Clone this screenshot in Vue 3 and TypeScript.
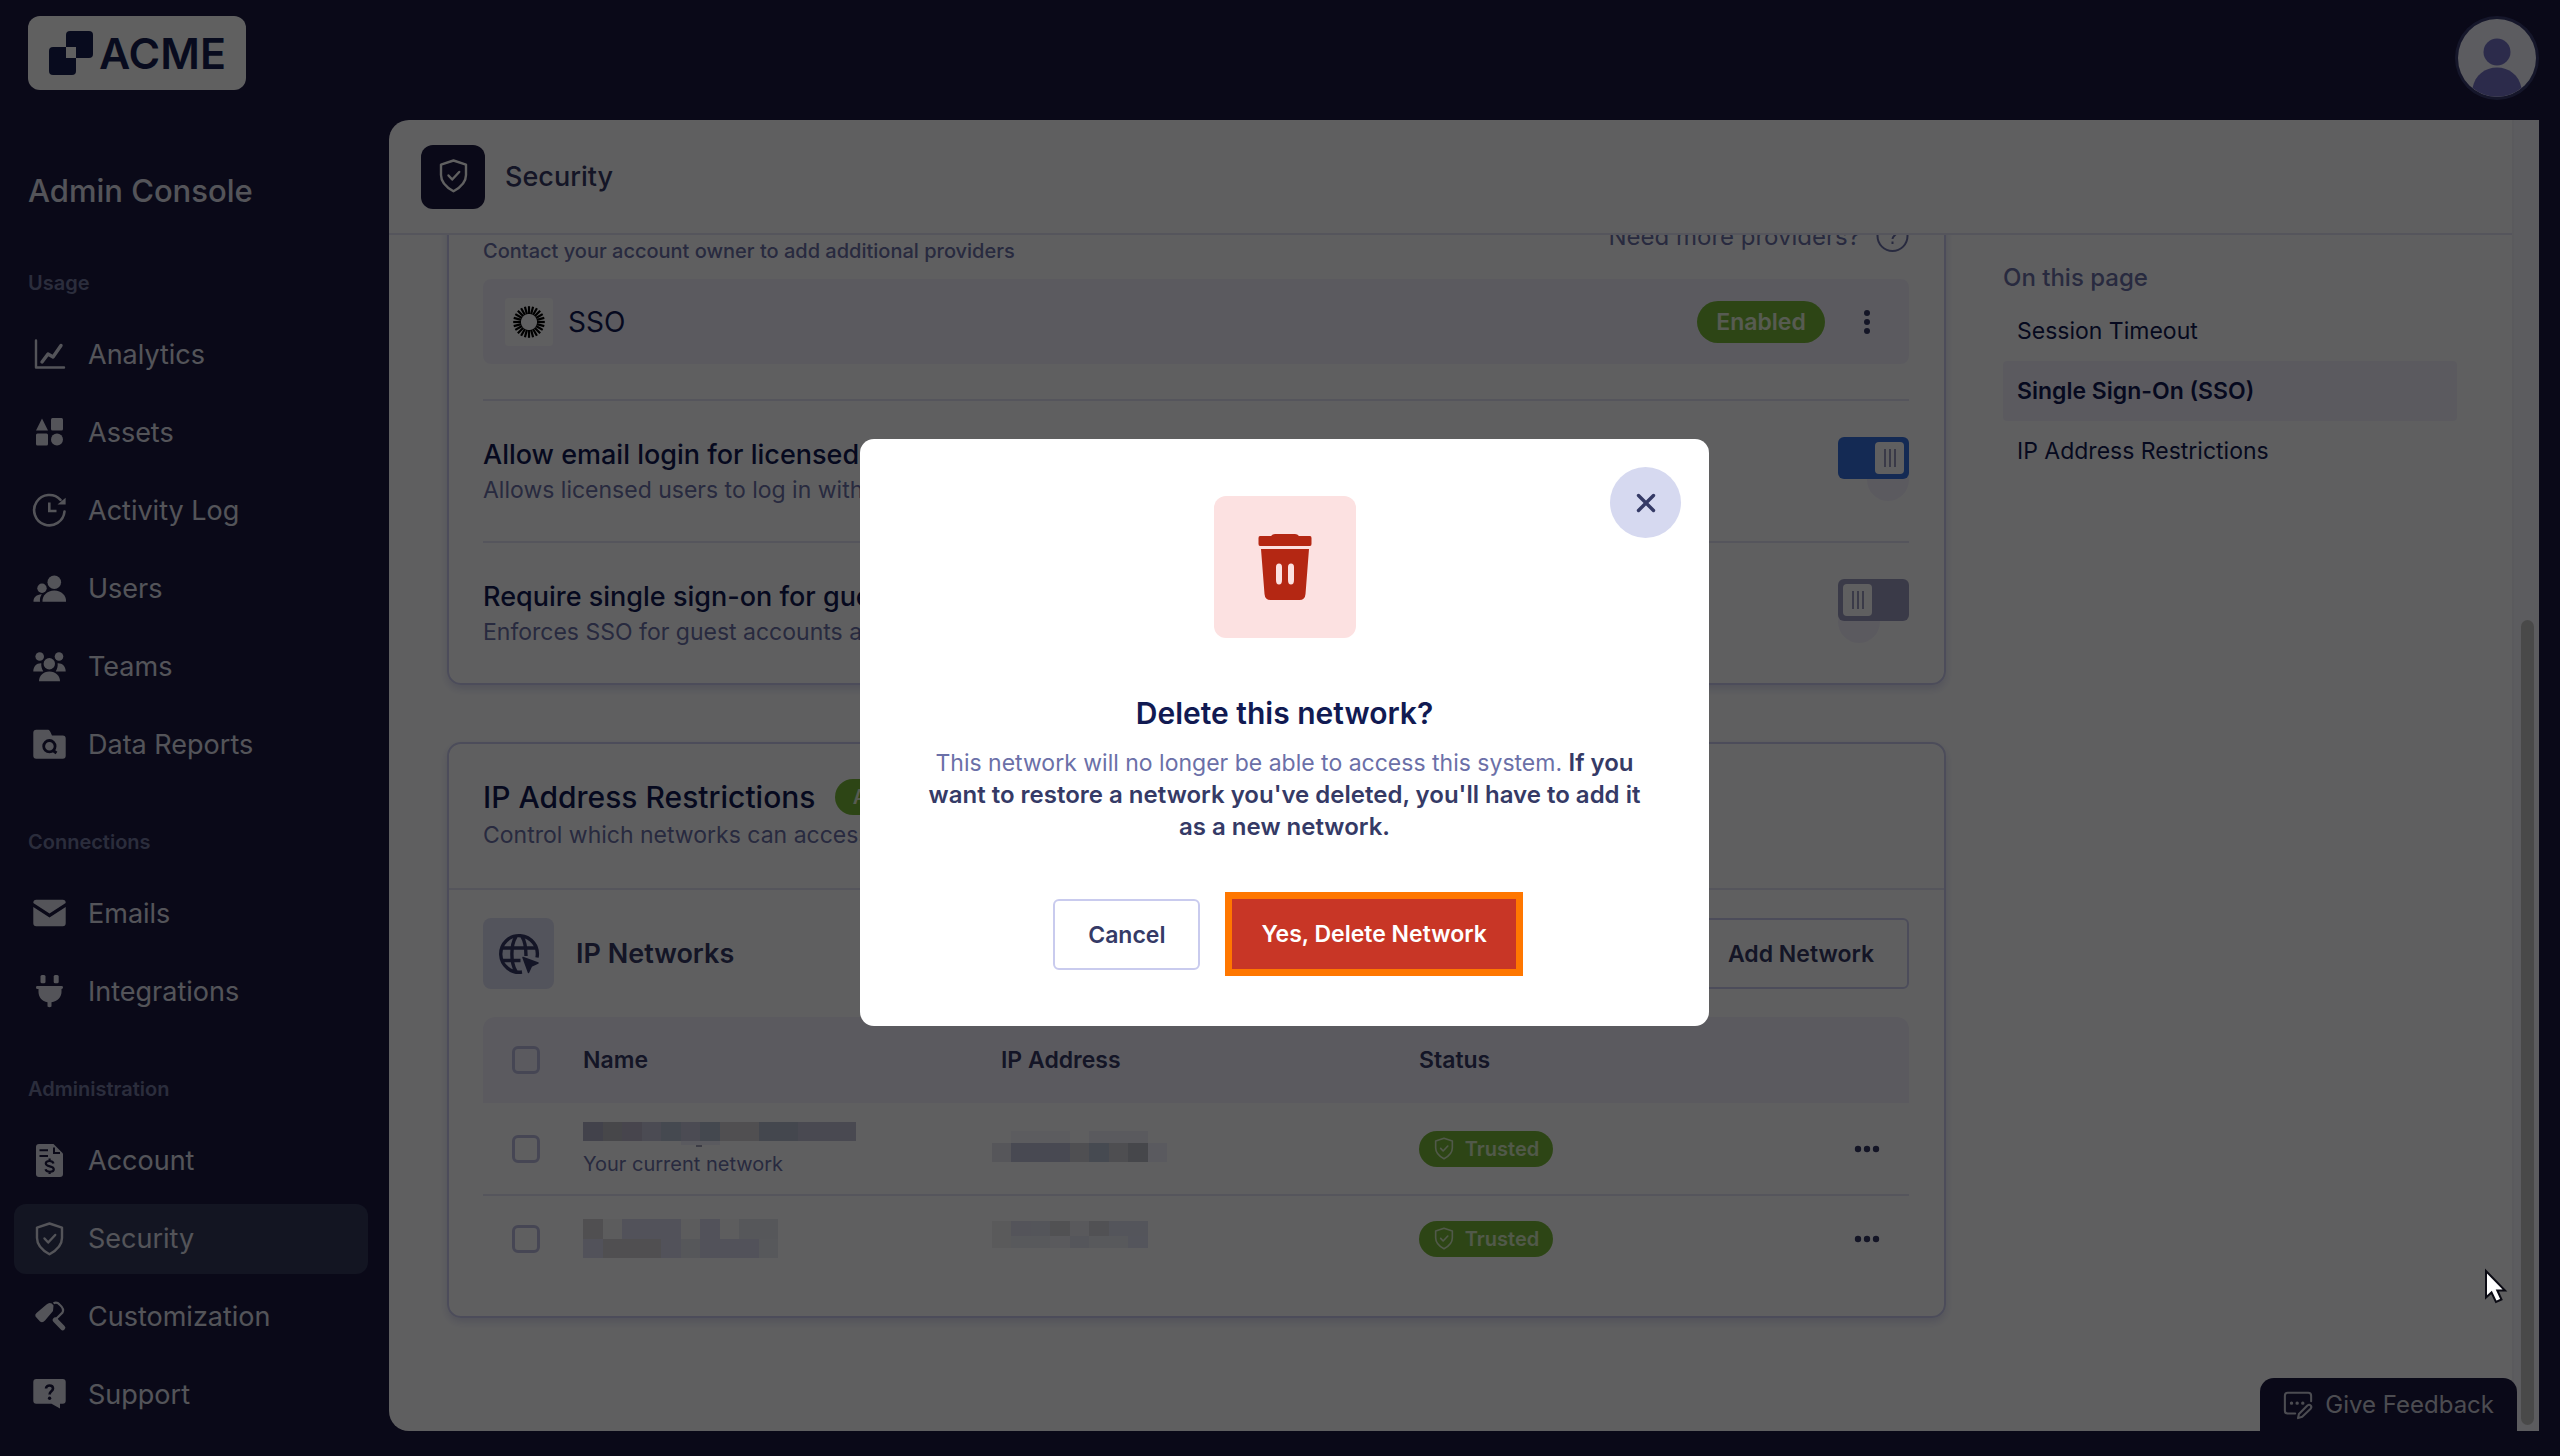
<script setup lang="ts">
import { ref } from 'vue'

interface NavItem {
  label: string
  icon: string
  active?: boolean
}

interface NavGroup {
  title: string
  items: NavItem[]
}

interface Cell {
  x: number
  y: number
  w: number
  h: number
  c: string
}

interface NetworkRow {
  id: string
  note: string
  name: Cell[]
  ip: Cell[]
}

const shield =
  '<path d="M16.5 0.5 29 4.6V15c0 7-5 12.200-12.500 16.200C9 27.200 4 22 4 15V4.600Z" fill="none" stroke="currentColor" stroke-width="2.400" stroke-linejoin="round"/><path d="m11.500 15.500 3.700 4 7-7.500" fill="none" stroke="currentColor" stroke-width="2.400" stroke-linecap="round" stroke-linejoin="round"/>'

const groups: NavGroup[] = [
  {
    title: 'Usage',
    items: [
      {
        label: 'Analytics',
        icon: '<path d="M3 1.500V28.500H31" fill="none" stroke="currentColor" stroke-width="2.400" stroke-linejoin="round" stroke-linecap="round"/><path d="m9 23 6-8 5 3 8-11.500" fill="none" stroke="currentColor" stroke-width="3.400" stroke-linejoin="round" stroke-linecap="round"/>'
      },
      {
        label: 'Assets',
        icon: '<path d="M9 1.500 15 13.500H3Z"/><rect x="18" y="1" width="12" height="12.500" rx="1.500"/><rect x="3" y="16.500" width="12" height="12" rx="1.500"/><circle cx="24" cy="22.500" r="6"/>'
      },
      {
        label: 'Activity Log',
        icon: '<path d="M31.500 16.500A15.200 15.200 0 1 1 27.500 4.800" fill="none" stroke="currentColor" stroke-width="2.600" stroke-linecap="round"/><path d="M32.600 2.800V9.500H24.500Z"/><path d="M16.300 7.500V16H23.500" fill="none" stroke="currentColor" stroke-width="2.600"/>'
      },
      {
        label: 'Users',
        icon: '<circle cx="21.300" cy="9.200" r="6.800"/><path d="M9.500 28.800C9 23 14 17.600 21.300 17.600S33.500 23 33 28.800Z"/><circle cx="9" cy="15.200" r="4.700"/><path d="M.5 28.800C.3 24.500 3.500 21.600 8.800 21.300 7.200 23.600 6.700 26 7 28.800Z"/>'
      },
      {
        label: 'Teams',
        icon: '<circle cx="6.700" cy="5.500" r="4.300"/><circle cx="26" cy="5.500" r="4.300"/><circle cx="16.300" cy="12.800" r="5.700"/><path d="M6 30.300C6 25 10 20.500 16.400 20.500S27 25 27 30.300Z"/><path d="M.3 20.500C.3 15.500 3.500 12 8.300 12.200 8 15.500 8.800 17.500 10.300 20.500Z"/><path d="M32.700 20.500C32.700 15.500 29.500 12 24.600 12.200 25 15.500 24.200 17.500 22.700 20.500Z"/>'
      },
      {
        label: 'Data Reports',
        icon: '<path d="M3.300.8H14.500c2.500 0 3 2.500 4.500 5.700H29.700q3 0 3 3V26.800q0 3-3 3H3.300q-3 0-3-3V3.800q0-3 3-3Z"/><circle cx="16.400" cy="17.200" r="5.700" fill="none" stroke="#1b1840" stroke-width="2.800"/><path d="m20 21.500 3.500 2.500" stroke="#1b1840" stroke-width="3"/>'
      }
    ]
  },
  {
    title: 'Connections',
    items: [
      {
        label: 'Emails',
        icon: '<path d="M3.300 1.800H29.700Q32.700 1.800 32.700 5L16.500 15.500.3 5Q.3 1.800 3.300 1.800Z"/><path d="M.3 9 16.500 19.500 32.700 9V25.200q0 3-3 3H3.300q-3 0-3-3Z"/>'
      },
      {
        label: 'Integrations',
        icon: '<rect x="7.500" y="-1" width="5" height="8.200" rx="1.500"/><rect x="20.700" y="-1" width="5" height="8.200" rx="1.500"/><path d="M4.500 10H28.500q1.500 0 1.500 1.400T28.500 13V16c0 5-4 9.500-10 10.300V30.500q-2 1.500-4 0V26.300C9 25.500 5.500 21 5.500 16V13H4.500Q3 13 3 11.400T4.500 10Z"/>'
      }
    ]
  },
  {
    title: 'Administration',
    items: [
      {
        label: 'Account',
        icon: '<path d="M6 -1H20.500L30 8.500V29q0 3-3 3H6q-3 0-3-3V2q0-3 3-3Z"/><path d="M6.500 5.300H15M6.500 11H15" stroke="#1b1840" stroke-width="2"/><path d="M21 2.500V8H27" fill="none" stroke="#1b1840" stroke-width="2"/><path d="M20.500 18.500C19.500 15 12.800 15.300 12.800 18.500 12.800 22.300 20.800 20.500 20.800 24.300 20.800 27.500 13.500 27.800 12.500 24.300M16.600 13.500V16M16.600 26.500V29" fill="none" stroke="#1b1840" stroke-width="2.200"/>'
      },
      { label: 'Security', icon: shield, active: true },
      {
        label: 'Customization',
        icon: '<path d="M13.500 3.500Q16 1 18.800 2.500L20.500 4.500 20 10 12 19.500Q9.500 22.500 7 20.500L2.500 15.500Q1.500 13.500 3.500 12Z"/><path d="M20.500 2.200Q24 .5 26.500 3.500 31.500 7.800 29.500 11.500L22 19" fill="none" stroke="currentColor" stroke-width="2.200"/><path d="m22.200 19 7.500 7.700" stroke="currentColor" stroke-width="5.200" stroke-linecap="round"/>'
      },
      {
        label: 'Support',
        icon: '<path d="M3.300 0H29.700q3 0 3 3V21.800q0 3-3 3H27V29.500L18.500 24.800H3.300q-3 0-3-3V3q0-3 3-3Z"/><path d="M13 9.500C13 5.500 20 5.500 20 9.500 20 12.500 16.600 12 16.600 15.500" fill="none" stroke="#1b1840" stroke-width="2.600"/><circle cx="16.600" cy="19.200" r="1.700" fill="#1b1840"/>'
      }
    ]
  }
]

const pageLinks = [
  { label: 'Session Timeout', active: false },
  { label: 'Single Sign-On (SSO)', active: true },
  { label: 'IP Address Restrictions', active: false }
]

const settings = ref([
  {
    id: 'email-login',
    title: 'Allow email login for licensed users',
    text: 'Allows licensed users to log in with their email',
    on: true
  },
  {
    id: 'guest-sso',
    title: 'Require single sign-on for guests',
    text: 'Enforces SSO for guest accounts as well',
    on: false
  }
])

// Builds one strip of redaction blocks from a list of colours.
function strip(y: number, h: number, size: number, colors: string[]): Cell[] {
  return colors
    .map((c, i) => ({ x: i * size, y, w: size, h, c }))
    .filter((cell) => cell.c !== '')
}

const networks: NetworkRow[] = [
  {
    id: 'current',
    note: 'Your current network',
    name: [
      ...strip(2, 19, 20, ['#b0b0c8', '#bcbcc4', '#bcb8cc', '#c6c6dc', '#b8c2d4', '#c6c6dc', '#b4c0d2', '#d4d2d8', '#d4d2d8', '#b4becf', '#b4becf', '#c2c2d8', '#c2c2d8', '#c2c2d8']),
      { x: 100, y: 21, w: 40, h: 4, c: '#f0f0fc' },
      { x: 116, y: 25, w: 6, h: 2, c: '#9fa0b8' }
    ],
    ip: [
      ...strip(0, 12, 20, ['', '#f3f3fb', '#f3f3fb', '#f3f3fb', '', '#f0f0fa', '#f0f0fa', '#f0f0fa']),
      ...strip(12, 19, 20, ['#e4e5f0', '#c0c2da', '#c0c2da', '#c0c2da', '#d2d2da', '#b9c5d6', '#ceced6', '#bbbcc6', '#f0f0fc'])
    ]
  },
  {
    id: 'second',
    note: '',
    name: [
      ...strip(0, 20, 20, ['#d4d2d8', '#f3f3f8', '#dadbf0', '#dadbf0', '#dadbf0', '#f3f3f8', '#dadbf0', '#f6f6fa', '#e4e6f0', '#e4e6f0']),
      ...strip(20, 19, 20, ['#dadbf0', '#d4d2d8', '#d4d2d8', '#d4d2d8', '#dadbf0', '#e4e6f0', '#dadbf0', '#dadbf0', '#dadbf0', '#e8eaf2'])
    ],
    ip: [
      ...strip(0, 15, 20, ['#eeeef2', '#dfe0ee', '#dfe1f0', '#d6d6dc', '#ebecf4', '#d8d8de', '#dfe1f1', '#dfe1f1']),
      ...strip(15, 12, 20, ['#eeeef2', '#e9ebf4', '#e9ebf4', '#f0f0f6', '#e2e4f2', '#e9ebf4', '#e9ebf4', '#dfe1f4'])
    ]
  }
]

const rays = Array.from({ length: 24 }, (_, i) => i * 15)
</script>

<template>
  <div class="app">
    <header class="topbar">
      <a class="logo" href="#" aria-label="ACME home">
        <svg width="44" height="44" viewBox="0 0 44 44" aria-hidden="true">
          <rect x="17" y="0" width="27" height="27" rx="4" />
          <rect x="0" y="16" width="27" height="28" rx="4" />
          <rect x="17" y="16" width="10" height="11" fill="#fff" />
        </svg>
        <span>ACME</span>
      </a>
      <button class="avatar" type="button" aria-label="Profile">
        <svg width="78" height="78" viewBox="0 0 78 78" aria-hidden="true">
          <circle cx="39" cy="39" r="39" fill="#f5f5ff" />
          <circle cx="39" cy="33" r="13.500" fill="#7573c8" />
          <path d="M14.500 69C17 56 27 48.500 39 48.500S61 56 63.500 69A39 39 0 0 1 14.500 69Z" fill="#7573c8" />
        </svg>
      </button>
    </header>

    <aside class="sidebar">
      <h1>Admin Console</h1>
      <nav v-for="group in groups" :key="group.title" class="nav-group" :aria-label="group.title">
        <h2>{{ group.title }}</h2>
        <a v-for="item in group.items" :key="item.label" href="#" class="nav-item" :class="{ active: item.active }">
          <svg width="33" height="33" viewBox="0 0 33 33" fill="currentColor" aria-hidden="true" v-html="item.icon"></svg>
          <span>{{ item.label }}</span>
        </a>
      </nav>
    </aside>

    <main class="panel">
      <div class="pane">
        <header class="pane-head">
          <span class="pane-icon">
            <svg width="33" height="33" viewBox="0 0 33 33" aria-hidden="true" v-html="shield"></svg>
          </span>
          <h2>Security</h2>
        </header>

        <div class="viewport">
          <div class="content">
            <div class="cards">
              <section class="card">
                <div class="providers">
                  <p class="hint">Contact your account owner to add additional providers</p>
                  <p class="more">
                    Need more providers?
                    <svg width="33" height="33" viewBox="0 0 33 33" fill="none" stroke="currentColor" stroke-width="2" aria-hidden="true">
                      <circle cx="16.500" cy="15" r="15" />
                      <path d="M12.500 12C12.500 7 20.500 7 20.500 11.500 20.500 14.500 16.500 14.500 16.500 18" />
                      <path d="M16.500 20.500V23" />
                    </svg>
                  </p>
                </div>
                <div class="sso">
                  <span class="sso-logo">
                    <svg width="32" height="32" viewBox="-16 -16 32 32" aria-hidden="true">
                      <path v-for="angle in rays" :key="angle" d="M0 -8V-15.800" :transform="`rotate(${angle})`" stroke="#000" stroke-width="2.200" />
                    </svg>
                  </span>
                  <span class="sso-name">SSO</span>
                  <span class="badge enabled">Enabled</span>
                  <button class="dots" type="button" aria-label="SSO options">
                    <svg width="8" height="26" viewBox="0 0 8 26" aria-hidden="true">
                      <circle cx="4" cy="4" r="3" />
                      <circle cx="4" cy="13" r="3" />
                      <circle cx="4" cy="22" r="3" />
                    </svg>
                  </button>
                </div>
                <div v-for="item in settings" :key="item.id" class="setting">
                  <label :for="item.id">
                    <span class="setting-title">{{ item.title }}</span>
                    <span class="sub">{{ item.text }}</span>
                  </label>
                  <span class="switch" :class="{ on: item.on }">
                    <input :id="item.id" v-model="item.on" type="checkbox" role="switch" />
                  </span>
                </div>
              </section>

              <section class="card">
                <div class="card-head">
                  <div class="title-line">
                    <h3>IP Address Restrictions</h3>
                    <span class="badge small">Active</span>
                  </div>
                  <p class="sub">Control which networks can access</p>
                </div>
                <div class="net-bar">
                  <span class="net-icon">
                    <svg width="40" height="40" viewBox="0 0 40 40" fill="none" stroke="currentColor" stroke-width="3.400" aria-hidden="true">
                      <path d="M23 38A18.300 18.300 0 1 1 38 23.500" />
                      <path d="M17 2.500C11.500 11 11.500 29 17 37.500M23 2.500C26.500 8 27 14 27 22M3.500 14H36.500M3 26.500H21.500" />
                      <path d="M24 23.500 39 29 32.500 32 29.500 38.500Z" fill="currentColor" stroke-width="1.500" stroke-linejoin="round" />
                    </svg>
                  </span>
                  <h4>IP Networks</h4>
                  <button class="outline" type="button">Add Network</button>
                </div>
                <table>
                  <colgroup>
                    <col class="c-check" />
                    <col />
                    <col />
                    <col />
                    <col class="c-action" />
                  </colgroup>
                  <thead>
                    <tr>
                      <th><input type="checkbox" aria-label="Select all networks" /></th>
                      <th>Name</th>
                      <th>IP Address</th>
                      <th>Status</th>
                      <th></th>
                    </tr>
                  </thead>
                  <tbody>
                    <tr v-for="row in networks" :key="row.id">
                      <td><input type="checkbox" :aria-label="`Select ${row.id} network`" /></td>
                      <td>
                        <svg
                          class="mosaic"
                          width="273"
                          :height="row.note ? 30 : 40"
                          :viewBox="`0 0 280 ${row.note ? 30 : 40}`"
                          preserveAspectRatio="none"
                          shape-rendering="crispEdges"
                          aria-hidden="true"
                        >
                          <rect v-for="(b, i) in row.name" :key="i" :x="b.x" :y="b.y" :width="b.w" :height="b.h" :fill="b.c" />
                        </svg>
                        <small v-if="row.note">{{ row.note }}</small>
                      </td>
                      <td>
                        <svg
                          class="mosaic ip"
                          width="175"
                          height="31"
                          viewBox="0 0 180 31"
                          preserveAspectRatio="none"
                          shape-rendering="crispEdges"
                          aria-hidden="true"
                        >
                          <rect v-for="(b, i) in row.ip" :key="i" :x="b.x" :y="b.y" :width="b.w" :height="b.h" :fill="b.c" />
                        </svg>
                      </td>
                      <td>
                        <span class="badge trusted">
                          <svg width="22" height="22" viewBox="0 0 33 33" aria-hidden="true" v-html="shield"></svg>
                          Trusted
                        </span>
                      </td>
                      <td>
                        <button class="dots" type="button" aria-label="Network options">
                          <svg width="26" height="8" viewBox="0 0 26 8" aria-hidden="true">
                            <circle cx="4" cy="4" r="3.200" />
                            <circle cx="13" cy="4" r="3.200" />
                            <circle cx="22" cy="4" r="3.200" />
                          </svg>
                        </button>
                      </td>
                    </tr>
                  </tbody>
                </table>
              </section>
            </div>

            <nav class="toc" aria-label="On this page">
              <h3>On this page</h3>
              <a v-for="link in pageLinks" :key="link.label" href="#" :class="{ active: link.active }">{{ link.label }}</a>
            </nav>
          </div>
        </div>
      </div>

      <div class="track"><div class="thumb"></div></div>

      <button class="feedback" type="button">
        <svg width="30" height="30" viewBox="0 0 32 32" fill="none" stroke="currentColor" stroke-width="2.200" stroke-linecap="round" stroke-linejoin="round" aria-hidden="true">
          <path d="M13 25H5Q2 25 2 22V6Q2 3 5 3H27Q30 3 30 6V12" />
          <path d="M17 25.500 26 16.500Q28 15 29.500 16.500T29.500 20L20.500 28.500 16 30Z" />
          <path d="M9 14H9.200M15 14H15.200M21 14H21.200" stroke-width="3.400" />
        </svg>
        Give Feedback
      </button>
    </main>

    <div class="overlay">
      <div class="dialog" role="dialog" aria-modal="true" aria-labelledby="dialog-title">
        <button class="close" type="button" aria-label="Close">
          <svg width="22" height="22" viewBox="0 0 22 22" aria-hidden="true">
            <path d="M3.500 3.500 18.500 18.500M18.500 3.500 3.500 18.500" stroke="currentColor" stroke-width="3.400" stroke-linecap="round" />
          </svg>
        </button>
        <div class="trash">
          <svg width="54" height="68" viewBox="0 0 54 68" fill="#b42713" aria-hidden="true">
            <path d="M13 3Q14.500 1 17 1H37Q39.500 1 41 3H52Q53.500 3 53.500 5V11Q53.500 13 52 13H2Q.5 13 .5 11V5Q.5 3 2 3Z" />
            <path fill-rule="evenodd" d="M3 16H51L47.500 61Q47 67 41.500 67H12.500Q7 67 6.500 61ZM18 34V47Q18 51.500 21 51.500T24 47V34Q24 30.500 21 30.500T18 34ZM30 34V47Q30 51.500 33 51.500T36 47V34Q36 30.500 33 30.500T30 34Z" />
          </svg>
        </div>
        <h2 id="dialog-title">Delete this network?</h2>
        <p>
          This network will no longer be able to access this system.
          <strong>If you want to restore a network you've deleted, you'll have to add it as a new network.</strong>
        </p>
        <div class="actions">
          <button class="outline" type="button">Cancel</button>
          <button class="danger" type="button">Yes, Delete Network</button>
        </div>
      </div>
    </div>

    <svg class="pointer" width="24" height="36" viewBox="0 0 24 36" aria-hidden="true">
      <path d="M2 1V27.500L7.500 22.500 12 32 17.500 29.500 13.300 20.500H21Z" fill="#fff" stroke="#0b0b14" stroke-width="2" />
    </svg>
  </div>
</template>

<style>
body {
  margin: 0;
  background: #0a0918;
}
</style>

<style scoped>
.app {
  --night: #1b1840;
  --ink: #111a52;
  --slate: #353a66;
  --muted: #6b70a8;
  --line: #e2e1f4;
  --edge: #c9cbee;
  --wash: #f2f0fd;
  --green: #78b838;
  box-sizing: border-box;
  position: relative;
  display: grid;
  grid-template-columns: 389px minmax(0, 1fr);
  grid-template-rows: 120px 1fr;
  min-height: 100vh;
  padding: 0 21px 25px 0;
  background: var(--night);
  color: var(--ink);
  font-family: Inter, "Open Sans", sans-serif;
  font-size: 24px;
  line-height: 32px;
}

.app *,
.app *::before,
.app *::after {
  box-sizing: border-box;
}

h1,
h2,
h3,
h4,
p {
  margin: 0;
  font-weight: 500;
}

a {
  color: inherit;
  text-decoration: none;
}

button {
  margin: 0;
  padding: 0;
  border: 0;
  background: none;
  color: inherit;
  font: inherit;
}

svg {
  display: block;
  flex: none;
  overflow: visible;
}

.topbar {
  grid-column: 1 / -1;
  display: flex;
  justify-content: space-between;
  align-items: flex-start;
  padding: 16px 0 0 28px;
}

.logo {
  display: flex;
  align-items: center;
  gap: 6px;
  width: 218px;
  height: 74px;
  padding-left: 21px;
  border-radius: 12px;
  background: #fff;
  color: #171f50;
  fill: currentColor;
  font-size: 43px;
  font-weight: 600;
}

.avatar {
  padding: 3px;
  border-radius: 50%;
  background: #383b70;
}

.sidebar {
  padding: 51px 21px 0 14px;
  color: #dfe0ec;
}

.sidebar h1 {
  padding-left: 14px;
  font-size: 31px;
  line-height: 40px;
}

.nav-group {
  display: flex;
  flex-direction: column;
  gap: 8px;
  margin-top: 50px;
}

h1 + .nav-group {
  margin-top: 60px;
}

.nav-group h2 {
  margin-bottom: 17px;
  padding-left: 14px;
  color: #7378a0;
  font-size: 20px;
  font-weight: 600;
  line-height: 24px;
}

.nav-item {
  display: flex;
  align-items: center;
  gap: 22px;
  height: 70px;
  padding-left: 19px;
  border-radius: 12px;
  font-size: 27px;
}

.nav-item.active {
  background: #33385b;
}

.panel {
  position: relative;
  display: grid;
  grid-template-columns: minmax(0, 1fr) 27px;
  border-radius: 20px 0 0 20px;
  background: #fdfdff;
  overflow: hidden;
}

.pane {
  display: flex;
  flex-direction: column;
}

.pane-head {
  display: flex;
  align-items: center;
  gap: 20px;
  height: 115px;
  padding-left: 32px;
  border-bottom: 2px solid var(--line);
}

.pane-head h2 {
  color: var(--slate);
  font-size: 27px;
}

.pane-icon {
  display: grid;
  place-items: center;
  width: 64px;
  height: 64px;
  border-radius: 12px;
  background: var(--night);
  color: #fff;
}

.viewport {
  flex: 1;
  overflow: hidden;
}

.content {
  display: grid;
  grid-template-columns: minmax(0, 1fr) 454px;
  gap: 57px;
  margin-top: -39px;
  padding: 0 55px 112px 58px;
}

.cards {
  display: flex;
  flex-direction: column;
  gap: 57px;
}

.card {
  padding: 0 35px 0 34px;
  border: 2px solid var(--edge);
  border-radius: 14px;
  box-shadow: 0 4px 8px #d9daf0;
}

.providers {
  display: flex;
  justify-content: space-between;
  align-items: flex-end;
  margin: 14px 0 17px;
  color: var(--muted);
}

.hint {
  font-size: 20px;
  line-height: 22px;
}

.more {
  display: flex;
  align-items: center;
  gap: 16px;
  height: 50px;
  font-weight: 400;
}

.sso {
  display: flex;
  align-items: center;
  height: 85px;
  margin-bottom: 35px;
  padding: 0 38px 0 22px;
  border-radius: 8px;
  background: var(--wash);
  font-size: 28px;
}

.sso-logo {
  display: grid;
  place-items: center;
  width: 48px;
  height: 48px;
  margin-right: 15px;
  border-radius: 4px;
  background: #fdfdff;
}

.sso-name {
  flex: 1;
}

.badge {
  display: inline-flex;
  align-items: center;
  justify-content: center;
  gap: 10px;
  height: 36px;
  border-radius: 18px;
  background: var(--green);
  color: #e6f2da;
  font-size: 20px;
  font-weight: 600;
}

.badge.enabled {
  width: 128px;
  height: 42px;
  margin-right: 38px;
  border-radius: 21px;
  font-size: 23px;
}

.badge.small {
  width: 96px;
}

.badge.trusted {
  width: 134px;
  color: #d8ecc4;
}

.dots {
  fill: var(--slate);
}

.setting {
  display: flex;
  justify-content: space-between;
  height: 142px;
  padding-top: 36px;
  border-top: 2px solid var(--line);
}

.setting-title {
  display: block;
  font-size: 27px;
  font-weight: 500;
  line-height: 36px;
}

.sub {
  display: block;
  color: var(--muted);
  font-size: 23px;
  font-weight: 400;
  line-height: 34px;
}

.switch {
  position: relative;
  width: 71px;
  height: 42px;
}

.switch::before {
  content: "";
  position: absolute;
  top: 22px;
  left: 0;
  width: 42px;
  height: 42px;
  border-radius: 50%;
  background: var(--wash);
}

.switch.on::before {
  left: 29px;
}

.switch input {
  position: relative;
  display: block;
  width: 71px;
  height: 42px;
  margin: 0;
  padding: 5px;
  border-radius: 6px;
  background: #9b9bc0;
  appearance: none;
}

.switch input::before {
  content: "";
  display: block;
  width: 29px;
  height: 32px;
  border-radius: 4px;
  background:
    linear-gradient(90deg, #9b9bc0 2px, transparent 2px 5px, #9b9bc0 5px 7px, transparent 7px 10px, #9b9bc0 10px 12px) center / 12px 18px no-repeat,
    #fdfdff;
}

.switch input:checked {
  padding-left: 37px;
  background: #3771de;
}

.card-head {
  margin: 0 -35px 0 -34px;
  padding: 33px 34px 35px;
  border-bottom: 2px solid var(--line);
}

.card-head .sub {
  line-height: 36px;
}

.title-line {
  display: flex;
  align-items: center;
  gap: 20px;
}

.title-line h3 {
  font-size: 30px;
  line-height: 40px;
}

.net-bar {
  display: flex;
  align-items: center;
  gap: 22px;
  margin: 28px 0 28px;
}

.net-bar h4 {
  flex: 1;
  color: var(--slate);
  font-size: 27px;
  font-weight: 600;
}

.net-icon {
  display: grid;
  place-items: center;
  width: 71px;
  height: 71px;
  border-radius: 8px;
  background: #dddef5;
  color: var(--slate);
}

.outline {
  height: 71px;
  padding: 0 33px;
  border: 2px solid var(--edge);
  border-radius: 6px;
  color: var(--slate);
  font-size: 23px;
  font-weight: 600;
}

table {
  width: 100%;
  margin-bottom: 34px;
  border-collapse: separate;
  border-spacing: 0;
  table-layout: fixed;
}

.c-check {
  width: 100px;
}

.c-action {
  width: 72px;
}

th,
td {
  padding: 0;
  text-align: left;
  vertical-align: middle;
}

th {
  height: 86px;
  background: var(--wash);
  color: var(--slate);
  font-size: 23px;
  font-weight: 600;
}

th:first-child {
  border-radius: 12px 0 0;
}

th:last-child {
  border-radius: 0 12px 0 0;
}

td {
  height: 93px;
  border-bottom: 2px solid var(--line);
}

tr:last-child td {
  height: 86px;
  border-bottom: 0;
}

table input {
  display: block;
  width: 28px;
  height: 28px;
  margin: 0 0 0 29px;
  border: 3px solid #b9bade;
  border-radius: 6px;
  appearance: none;
}

.mosaic.ip {
  margin: 0 0 5px -9px;
}

small {
  display: block;
  color: var(--muted);
  font-size: 20px;
  line-height: 28px;
}

table .badge {
  display: flex;
}

table .dots {
  display: block;
  margin-left: 17px;
}

.toc {
  padding-top: 66px;
}

.toc h3 {
  margin-bottom: 7px;
  color: var(--muted);
  font-size: 24px;
}

.toc a {
  display: block;
  padding: 14px;
  border-radius: 4px;
  font-size: 23px;
}

.toc a.active {
  background: var(--wash);
  font-weight: 600;
}

.track {
  display: flex;
  padding: 500px 5px 6px 7px;
  border-left: 2px solid #efeef6;
  background: #f5f4fb;
}

.thumb {
  flex: 1;
  border-radius: 7px;
  background: #c3c3c3;
}

.feedback {
  position: absolute;
  right: 22px;
  bottom: 0;
  display: flex;
  align-items: center;
  gap: 12px;
  height: 53px;
  padding: 0 23px;
  border-radius: 14px 14px 0 0;
  background: var(--night);
  color: #c9cad8;
}

.overlay {
  position: absolute;
  inset: 0;
  display: grid;
  place-items: center;
  padding: 9px 0 0 9px;
  background: rgba(0, 0, 0, 0.625);
}

.dialog {
  position: relative;
  display: flex;
  flex-direction: column;
  align-items: center;
  width: 849px;
  max-width: 100%;
  padding: 57px 60px 56px;
  border-radius: 14px;
  background: #fff;
}

.close {
  position: absolute;
  top: 28px;
  right: 28px;
  display: grid;
  place-items: center;
  width: 71px;
  height: 71px;
  border-radius: 50%;
  background: #d6d9f0;
  color: var(--slate);
}

.trash {
  display: grid;
  place-items: center;
  width: 142px;
  height: 142px;
  border-radius: 12px;
  background: #fce1e1;
}

.dialog h2 {
  margin-top: 55px;
  font-size: 30px;
  font-weight: 600;
  line-height: 40px;
}

.dialog p {
  margin: 14px 0 56px;
  color: var(--muted);
  font-size: 23px;
  font-weight: 400;
  text-align: center;
}

.dialog strong {
  color: var(--slate);
  font-size: 24px;
  font-weight: 600;
}

.actions {
  display: flex;
  gap: 32px;
}

.danger {
  height: 70px;
  padding: 0 29px;
  background: #c83626;
  color: #fff;
  font-size: 23px;
  font-weight: 600;
  outline: 7px solid #ff7700;
}

.pointer {
  position: absolute;
  right: 52px;
  bottom: 150px;
}
</style>
